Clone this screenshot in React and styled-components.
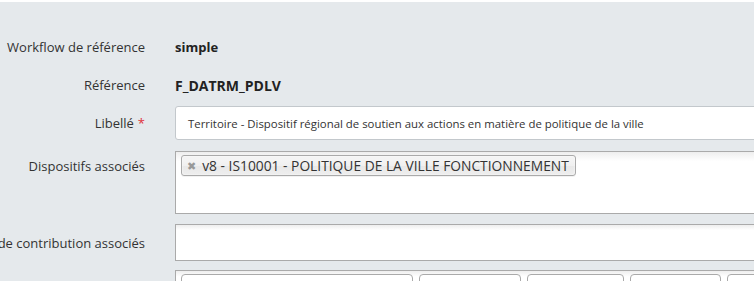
import React from "react";
import styled, { createGlobalStyle } from "styled-components";

const GlobalStyle = createGlobalStyle`
  html, body {
    margin: 0;
    padding: 0;
    overflow: hidden;
    background: #e5e9ec;
  }
  body {
    font-family: "Open Sans", "DejaVu Sans", sans-serif;
    color: #333;
  }
`;

const Page = styled.div`
  border-top: 2px solid #ffffff;
  padding-top: 28px;
  width: 900px;
`;

const Row = styled.div`
  display: grid;
  grid-template-columns: 145px 620px;
  column-gap: 30px;
  align-items: ${(p) => (p.top ? "start" : "center")};
  min-height: ${(p) => p.h || 34}px;
  margin-bottom: ${(p) => p.gap || 4}px;
`;

const Label = styled.div`
  display: flex;
  justify-content: flex-end;
  white-space: nowrap;
  font-size: 13px;
  color: #333;
  padding-top: ${(p) => p.pt || 0}px;
`;

const Required = styled.span`
  color: #e0303a;
  margin-left: 4px;
`;

const Value = styled.div`
  font-weight: 700;
  font-size: ${(p) => p.size || 13}px;
  color: #222;
`;

const TextInput = styled.div`
  box-sizing: border-box;
  height: 34px;
  background: #fff;
  border: 1px solid #c3c8cc;
  border-radius: 3px;
  padding: 0 12px;
  display: flex;
  align-items: center;
  font-size: 11.4px;
  color: #333;
  white-space: nowrap;
`;

const Multi = styled.div`
  box-sizing: border-box;
  height: ${(p) => p.h}px;
  background: #fff linear-gradient(to bottom, #eeeeee 0%, #ffffff 15%);
  border: 1px solid #aaa;
  padding: 3px 5px;
  display: flex;
  align-items: flex-start;
  gap: 6px;
`;

const Tag = styled.div`
  display: flex;
  align-items: center;
  box-sizing: border-box;
  height: 21px;
  padding: 0 6px 0 5px;
  border: 1px solid #aaa;
  border-radius: 3px;
  background: linear-gradient(to bottom, #f4f4f4 20%, #f0f0f0 50%, #e8e8e8 52%, #eeeeee 100%);
  box-shadow: 0 0 2px #fff inset, 0 1px 0 rgba(0, 0, 0, 0.05);
  font-size: 13.8px;
  color: #333;
  white-space: nowrap;
`;

const Close = styled.span`
  font-size: 11px;
  font-weight: 700;
  color: #999;
  margin-right: 6px;
`;

const Chip = styled.div`
  box-sizing: border-box;
  flex: none;
  width: ${(p) => p.w}px;
  height: 24px;
  border: 1px solid #aaa;
  border-radius: 4px;
  background: #fff;
  font-size: 13px;
  padding-top: 3px;
  text-align: center;
  color: #2a6ebb;
  white-space: nowrap;
  overflow: hidden;
`;

const Star = styled.span`
  color: #e0303a;
`;

export default function App() {
  return (
    <>
      <GlobalStyle />
      <Page>
        <Row>
          <Label>Workflow de référence</Label>
          <Value>simple</Value>
        </Row>
        <Row>
          <Label>Référence</Label>
          <Value size={14}>F_DATRM_PDLV</Value>
        </Row>
        <Row gap={11}>
          <Label>
            <span>Libellé</span>
            <Required>*</Required>
          </Label>
          <TextInput>
            Territoire - Dispositif régional de soutien aux actions en matière de politique de la ville
          </TextInput>
        </Row>
        <Row top h={63} gap={10}>
          <Label pt={6}>Dispositifs associés</Label>
          <Multi h={63}>
            <Tag>
              <Close>✖</Close>v8 - IS10001 - POLITIQUE DE LA VILLE FONCTIONNEMENT
            </Tag>
          </Multi>
        </Row>
        <Row h={37} gap={9}>
          <Label>
            <span>Modèles de contribution associés</span>
          </Label>
          <Multi h={37} />
        </Row>
        <Row top h={40}>
          <Label />
          <Multi h={40}>
            <Chip w={232}>
              Politique de la ville <Star>*</Star>
            </Chip>
            <Chip w={102}>Territoire</Chip>
            <Chip w={97}>Quartier</Chip>
            <Chip w={91}>Contrat</Chip>
            <Chip w={95}>Action</Chip>
          </Multi>
        </Row>
      </Page>
    </>
  );
}
